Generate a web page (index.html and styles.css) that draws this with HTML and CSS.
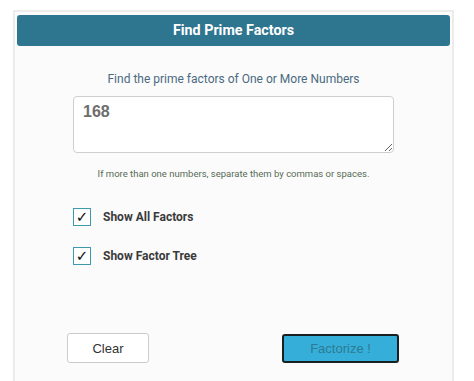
FILE: index.html
```html
<!DOCTYPE html>
<html lang="en">
<head>
  <meta charset="UTF-8" />
  <title>Find Prime Factors</title>
  <link rel="stylesheet" href="styles.css">
</head>
<body>

  <div class="panel">
    <div class="panel-title">Find Prime Factors</div>

    <p class="intro">Find the prime factors of One or More Numbers</p>

    <textarea class="numbers">168</textarea>

    <p class="hint">If more than one numbers, separate them by commas or spaces.</p>

    <div class="options">
      <label class="option"><span class="box">&#10003;</span>Show All Factors</label>
      <label class="option"><span class="box">&#10003;</span>Show Factor Tree</label>
    </div>

    <div class="actions">
      <button class="btn btn-clear">Clear</button>
      <button class="btn btn-go">Factorize !</button>
    </div>
  </div>

</body>
</html>
```

FILE: styles.css
```css
body {
  margin: 0;
  font-family: Roboto, 'Liberation Sans', sans-serif;
  background: #fff;
  color: #333;
}

.panel {
  margin: 10px 0 0 13px;
  width: 441px;
  height: 371px;
  box-sizing: border-box;
  background: #fbfbfb;
  border: 2px solid #ececec;
  border-bottom: none;
  display: flex;
  flex-direction: column;
}

.panel-title {
  margin: 3px 2px 0;
  height: 31px;
  line-height: 31px;
  background: #2e7590;
  color: #fff;
  border-radius: 3px;
  text-align: center;
  font-size: 14.3px;
  font-weight: 700;
}

.intro {
  margin: 25px 0 0;
  text-align: center;
  font-size: 12px;
  line-height: 16px;
  color: #4a6a80;
}

.numbers {
  margin: 9px 0 0 58px;
  width: 321px;
  height: 57px;
  box-sizing: border-box;
  padding: 6px 9px;
  border: 1px solid #cfcfcf;
  border-radius: 4px;
  background: #fff;
  font-family: 'Liberation Sans', Arial, sans-serif;
  font-size: 16px;
  font-weight: 700;
  color: #6d6d6d;
}

.hint {
  margin: 14px 0 0;
  text-align: center;
  font-size: 9.5px;
  line-height: 13px;
  color: #566b55;
}

.options {
  margin: 28px 0 0 58px;
  display: flex;
  flex-direction: column;
  gap: 21px;
}

.option {
  display: flex;
  align-items: center;
  font-size: 12px;
  font-weight: 700;
  color: #3a3a3a;
}

.box {
  width: 16px;
  height: 16px;
  margin-right: 12px;
  border: 1px solid #3f99ad;
  background: #fff;
  color: #111;
  font-size: 15px;
  line-height: 16px;
  text-align: center;
  font-family: 'DejaVu Sans', sans-serif;
  font-weight: 400;
}

.actions {
  margin: 68px 0 0 52px;
  display: flex;
  align-items: center;
  gap: 133px;
}

.btn {
  font-family: 'Liberation Sans', Arial, sans-serif;
  font-size: 13px;
  border-radius: 3px;
  cursor: pointer;
}

.btn-clear {
  width: 82px;
  height: 30px;
  background: #fff;
  border: 1px solid #cccccc;
  color: #333;
}

.btn-go {
  width: 117px;
  height: 29px;
  background: #35afd9;
  border: 2px solid #1a1f22;
  color: #2d7a94;
}
```
